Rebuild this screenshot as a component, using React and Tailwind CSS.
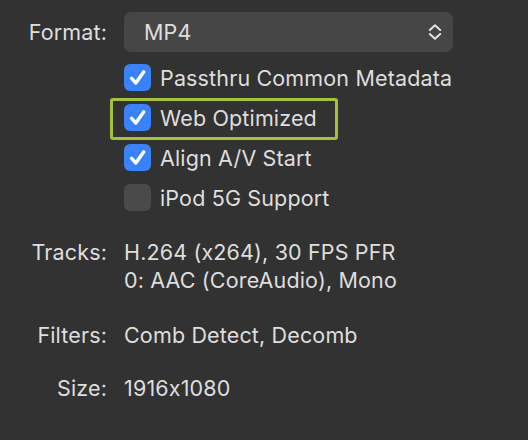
import React from "react";

const font = { fontFamily: "Inter, 'Noto Sans', sans-serif" };

function Check({ checked }) {
  if (!checked) {
    return <div className="w-[27px] h-[27px] rounded-[6px] bg-[#4a4a4a] shrink-0" />;
  }
  return (
    <div className="w-[27px] h-[27px] rounded-[6px] bg-[#3a82f7] shrink-0 flex items-center justify-center">
      <svg width="27" height="27" viewBox="0 0 27 27">
        <path d="M7.5 14.2 L11.8 19 L19.8 7.8" fill="none" stroke="#fff" strokeWidth="3.4" strokeLinecap="round" strokeLinejoin="round" />
      </svg>
    </div>
  );
}

function Row({ label, checked, highlight }) {
  return (
    <div className="relative flex items-center gap-[9px] h-[27px]">
      {highlight && (
        <div className="absolute left-[-14px] top-[-6px] w-[228px] h-[42px] border-[3px] border-[#a3c23c] rounded-[3px]" />
      )}
      <Check checked={checked} />
      <span>{label}</span>
    </div>
  );
}

export default function App() {
  const options = [
    { label: "Passthru Common Metadata", checked: true },
    { label: "Web Optimized", checked: true, highlight: true },
    { label: "Align A/V Start", checked: true },
    { label: "iPod 5G Support", checked: false },
  ];

  return (
    <div className="w-[528px] h-[440px] bg-[#323232] text-[#dedede] text-[21.5px] leading-[28px] tracking-[0.15px] [font-feature-settings:'calt'_0]" style={font}>
      <div className="pt-[12px] grid grid-cols-[107px_1fr] gap-x-[17px]">
        {/* Format */}
        <div className="text-right h-[40px] flex items-center justify-end">Format:</div>
        <div className="w-[329px] h-[40px] rounded-[7px] bg-[#464646] flex items-center justify-between pl-[20px] pr-[11px]">
          <span>MP4</span>
          <svg width="14" height="18" viewBox="0 0 14 18">
            <path d="M1.8 7 L7 2.2 L12.2 7" fill="none" stroke="#e2e2e2" strokeWidth="2" strokeLinecap="round" strokeLinejoin="round" />
            <path d="M1.8 11 L7 15.8 L12.2 11" fill="none" stroke="#e2e2e2" strokeWidth="2" strokeLinecap="round" strokeLinejoin="round" />
          </svg>
        </div>

        {/* Options */}
        <div />
        <div className="pt-[12px] flex flex-col gap-[13px]">
          {options.map((o) => (
            <Row key={o.label} {...o} />
          ))}
        </div>

        {/* Tracks */}
        <div className="text-right pt-[27px]">Tracks:</div>
        <div className="pt-[27px]">
          <div>H.264 (x264), 30 FPS PFR</div>
          <div>0: AAC (CoreAudio), Mono</div>
        </div>

        <div className="text-right pt-[27px]">Filters:</div>
        <div className="pt-[27px]">Comb Detect, Decomb</div>

        <div className="text-right pt-[25px]">Size:</div>
        <div className="pt-[25px]">1916x1080</div>
      </div>
    </div>
  );
}
